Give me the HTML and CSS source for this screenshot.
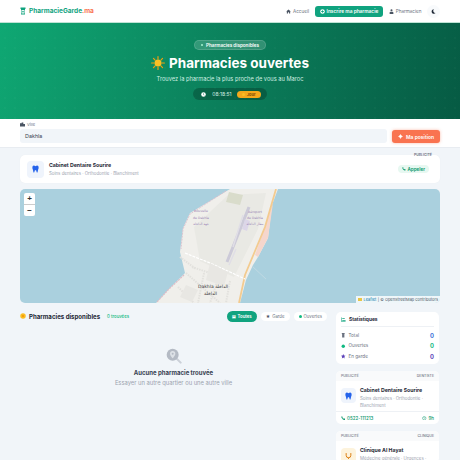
FILE: index.html
```html
<!DOCTYPE html>
<html lang="fr">
<head>
    <meta charset="UTF-8">
    <title>PharmacieGarde.ma</title>
    <link rel="stylesheet" href="styles.css">
</head>
<body>
    <nav class="navbar">
        <div class="brand">
            <svg class="brand-icon" viewBox="0 0 12 14"><path d="M1 0h10v3h-1v11H2V3H1z" fill="#10a37f"/><path d="M3 5h6v7H3z" fill="#fff"/><path d="M5.300 6.500h1.400v1.300H8v1.400H6.700v1.300H5.300V9.200H4V7.800h1.300z" fill="#10a37f"/></svg>
            <span>PharmacieGarde<em>.ma</em></span>
        </div>
        <div class="nav-links">
            <a class="nav-link">
                <svg viewBox="0 0 12 12"><path d="M6 1l5.500 5H10v5H7.300V8H4.700v3H2V6H.5z" fill="#4b5563"/></svg>
                Accueil
            </a>
            <a class="nav-cta">
                <svg viewBox="0 0 12 12"><circle cx="6" cy="6" r="5.500" fill="#fff"/><path d="M5 3h2v2h2v2H7v2H5V7H3V5h2z" fill="#10a37f"/></svg>
                Inscrire ma pharmacie
            </a>
            <a class="nav-link">
                <svg viewBox="0 0 12 12"><circle cx="6" cy="3" r="2.500" fill="#4b5563"/><path d="M1.500 12V9q0-2.500 2.500-2.500h4q2.500 0 2.500 2.500v3z" fill="#4b5563"/></svg>
                Pharmacien
            </a>
            <button class="theme-toggle">
                <svg viewBox="0 0 12 12"><path d="M7 .5a5.500 5.500 0 1 0 4 9.300A5.500 5.500 0 0 1 7 .5z" fill="#1f2937"/></svg>
            </button>
        </div>
    </nav>

    <header class="hero">
        <div class="hero-badge"><i></i>Pharmacies disponibles</div>
        <h1>
            <svg class="sun" viewBox="0 0 24 24">
                <g stroke="#f59e0b" stroke-width="2" stroke-linecap="round">
                    <path d="M12 1v4M12 19v4M1 12h4M19 12h4M4.200 4.200l2.800 2.800M17 17l2.800 2.800M4.200 19.800L7 17M17 7l2.800-2.800"/>
                </g>
                <circle cx="12" cy="12" r="6" fill="#fbbf24"/>
            </svg>
            Pharmacies ouvertes
        </h1>
        <p>Trouvez la pharmacie la plus proche de vous au Maroc</p>
        <div class="hero-clock">
            <svg viewBox="0 0 12 12"><circle cx="6" cy="6" r="5.500" fill="#fff"/><path d="M6 3v3.300l2 1.200" fill="none" stroke="#0b6b50" stroke-width="1.200"/></svg>
            <span>08:18:51</span>
            <b><i></i>Jour</b>
        </div>
    </header>

    <section class="search-bar">
        <div class="search-field">
            <label>
                <svg viewBox="0 0 12 12"><path d="M0 11V3h4V1h4v4h4v6z" fill="#4b5563"/></svg>
                Ville
            </label>
            <div class="search-input">Dakhla</div>
        </div>
        <button class="locate-btn">
            <svg viewBox="0 0 12 12"><circle cx="6" cy="6" r="3.500" fill="#fff"/><path d="M6 0v12M0 6h12" stroke="#fff" stroke-width="1.200"/></svg>
            Ma position
        </button>
    </section>

    <div class="page">
        <div class="ad-banner">
            <span class="ad-tag">PUBLICITÉ</span>
            <div class="ad-icon">
                <svg viewBox="0 0 12 14"><path d="M3 1q1.500 0 3 1 1.500-1 3-1 2.500 0 2.500 3.500 0 2-1 4L9.500 13H8.300L7 9H5l-1.300 4H2.500l-1-4.500q-1-2-1-4Q.5 1 3 1z" fill="#2563eb"/></svg>
            </div>
            <div class="ad-text">
                <strong>Cabinet Dentaire Sourire</strong>
                <small>Soins dentaires · Orthodontie · Blanchiment</small>
            </div>
            <a class="ad-call">
                <svg viewBox="0 0 12 12"><path d="M1 1.500L3.500 1l1.300 2.800-1.300 1q1 2 2.700 2.700l1-1.300L11 7.500 10.500 10Q9.500 11 8 10.700 2.500 9 1.300 4 .8 2.500 1 1.500z" fill="#059669"/></svg>
                Appeler
            </a>
        </div>

        <div class="map">
            <svg class="map-tiles" viewBox="0 0 420 114" preserveAspectRatio="none">
                <rect width="420" height="114" fill="#aad0de"/>
                <!-- presqu'ile de Dakhla -->
                <path d="M210 0L170 24 163 39 160 63 165 84 150 99 136 114H220L226 91 233 76 238 68 248 49 252 16 258 0z" fill="#f0efeb"/>
                <path d="M253 14L248 49 238 68 235 66 244 40z" fill="#f5d6cc"/>
                <path d="M208 6L246 4 238 40 214 88 180 72 174 38z" fill="#e9e9e4"/>
                <path d="M209 3l14 3-3 10-14-3z" fill="#d9dccb"/>
                <!-- aeroport -->
                <path d="M229 18L207 73" stroke="#cccad8" stroke-width="3"/>
                <path d="M223 26L213 58M216 60L209 76" stroke="#e0dee6" stroke-width="1.500"/>
                <path d="M225 30l5 2-3 10-5-2z" fill="#dcd6e8"/>
                <!-- routes et limite -->
                <path d="M256 0L245 38 225 86 219 114" fill="none" stroke="#f3cb90" stroke-width="1.800"/>
                <path d="M206 2L170 25 163 40 161 60" fill="none" stroke="#dcc3cf" stroke-width="1" stroke-dasharray="2 1"/>
                <path d="M164 86L148 101 137 113" fill="none" stroke="#dfbcc6" stroke-width="1.200" stroke-dasharray="2 1"/>
                <path d="M165 64L190 74 210 83 225 90" fill="none" stroke="#fff" stroke-width="1.200" stroke-dasharray="3 1"/>
                <path d="M160 68L176 80M166 84L200 114M172 78L196 86M158 98L174 114M184 84L178 114M198 90L190 114M210 92L206 114" fill="none" stroke="#e2e1dd" stroke-width="2" stroke-dasharray="1.500 1"/>
                <path d="M190 74l18 9-4 14-18-6zM166 96l12 5-6 12-12-5z" fill="#e8e7e3"/>
                <path d="M233 78L246 90" stroke="#c4dbe3" stroke-width=".8"/>
                <text class="map-label-purple"><tspan x="181" y="23">Nouvelle</tspan><tspan x="181" y="30">de Dakhla</tspan><tspan x="181" y="36">جهة الداخلة</tspan></text>
                <text class="map-label-purple"><tspan x="235" y="24">Aéroport</tspan><tspan x="235" y="30">de Dakhla</tspan><tspan x="235" y="36">مطار الداخلة</tspan></text>
                <text class="map-label" x="178" y="99">Dakhla الداخلة</text>
                <text class="map-label" x="184" y="106">الداخلة</text>
            </svg>
            <div class="zoom-ctrl">
                <span>+</span>
                <span>−</span>
            </div>
            <div class="attribution"><i></i><em>Leaflet</em> | © OpenStreetMap contributors</div>
        </div>

        <div class="content">
            <main class="list-col">
                <div class="list-head">
                    <div class="list-title">
                        <svg viewBox="0 0 12 12"><circle cx="6" cy="6" r="5.500" fill="#fbbf24"/><circle cx="6" cy="6" r="2.500" fill="#f59e0b"/></svg>
                        <h2>Pharmacies disponibles</h2>
                        <span class="count">0 trouvées</span>
                    </div>
                    <div class="filters">
                        <span class="filter active">▤ Toutes</span>
                        <span class="filter"><b class="star">★</b> Garde</span>
                        <span class="filter"><b class="dot"></b> Ouvertes</span>
                    </div>
                </div>
                <div class="empty">
                    <svg viewBox="0 0 24 24"><path d="M15 15l7 7" stroke="#cbd0d8" stroke-width="3" stroke-linecap="round"/><circle cx="10" cy="10" r="9" fill="#b4bac4"/><path d="M10 4.500a4 4 0 0 0-4 4c0 3 4 7 4 7s4-4 4-7a4 4 0 0 0-4-4z" fill="#dde1e6"/><circle cx="10" cy="8.500" r="1.500" fill="#b4bac4"/></svg>
                    <strong>Aucune pharmacie trouvée</strong>
                    <p>Essayer un autre quartier ou une autre ville</p>
                </div>
            </main>

            <aside class="sidebar">
                <div class="card stats">
                    <div class="stats-title">
                        <svg viewBox="0 0 12 12"><path d="M1 1v10h10" fill="none" stroke="#10a37f" stroke-width="1.500"/><path d="M3 3h6v2H3zM3 7h8v2H3z" fill="#10a37f"/></svg>
                        Statistiques
                    </div>
                    <div class="stat-row">
                        <svg viewBox="0 0 12 12"><path d="M2 0h8v2H9v10H3V2H2z" fill="#6b7280"/></svg>
                        <span>Total</span><b class="blue">0</b>
                    </div>
                    <div class="stat-row">
                        <svg viewBox="0 0 12 12"><circle cx="6" cy="6" r="4.500" fill="#10b981"/></svg>
                        <span>Ouvertes</span><b class="green">0</b>
                    </div>
                    <div class="stat-row">
                        <svg viewBox="0 0 12 12"><path d="M6 0l1.800 4 4.200.500-3.100 2.900.8 4.300L6 9.600l-3.700 2.100.8-4.300L0 4.500 4.200 4z" fill="#5b3fb8"/></svg>
                        <span>En garde</span><b class="purple">0</b>
                    </div>
                </div>

                <div class="card ad-card">
                    <div class="ad-card-head"><span>PUBLICITÉ</span><span>DENTISTE</span></div>
                    <div class="ad-card-body">
                        <div class="ad-card-icon blue-bg">
                            <svg viewBox="0 0 12 14"><path d="M3 1q1.500 0 3 1 1.500-1 3-1 2.500 0 2.500 3.500 0 2-1 4L9.500 13H8.300L7 9H5l-1.300 4H2.500l-1-4.500q-1-2-1-4Q.5 1 3 1z" fill="#2563eb"/></svg>
                        </div>
                        <div class="ad-card-text">
                            <strong>Cabinet Dentaire Sourire</strong>
                            <small>Soins dentaires · Orthodontie · Blanchiment</small>
                        </div>
                    </div>
                    <div class="ad-card-foot">
                        <span><svg viewBox="0 0 12 12"><path d="M1 1.500L3.500 1l1.300 2.800-1.300 1q1 2 2.700 2.700l1-1.300L11 7.500 10.500 10Q9.500 11 8 10.700 2.500 9 1.300 4 .8 2.500 1 1.500z" fill="#059669"/></svg>0522-111213</span>
                        <span><svg viewBox="0 0 12 12"><circle cx="6" cy="6" r="4.500" fill="none" stroke="#059669" stroke-width="1.300"/><path d="M6 3.500V6l1.800 1" fill="none" stroke="#059669"/></svg>9h</span>
                    </div>
                </div>

                <div class="card ad-card">
                    <div class="ad-card-head"><span>PUBLICITÉ</span><span>CLINIQUE</span></div>
                    <div class="ad-card-body">
                        <div class="ad-card-icon amber-bg">
                            <svg viewBox="0 0 12 12"><path d="M2 1v4a4 4 0 0 0 8 0V1M6 9v2" fill="none" stroke="#d97706" stroke-width="1.600"/></svg>
                        </div>
                        <div class="ad-card-text">
                            <strong>Clinique Al Hayat</strong>
                            <small>Médecine générale · Urgences ·</small>
                        </div>
                    </div>
                </div>
            </aside>
        </div>
    </div>
</body>
</html>
```

FILE: styles.css
```css
* {
    box-sizing: border-box;
}
html, body {
    height: 460px;
    overflow: hidden;
}
body {
    margin: 0;
    font-family: Inter, "Liberation Sans", sans-serif;
    background-color: #f1f5f9;
    color: #1f2937;
}
svg {
    display: block;
    flex-shrink: 0;
}

/* Barre de navigation */
.navbar {
    height: 23px;
    padding: 0 20px;
    display: flex;
    align-items: center;
    justify-content: space-between;
    background-color: #fff;
    border-bottom: 1px solid #bfe3d5;
}
.brand {
    display: flex;
    align-items: center;
    gap: 3px;
    font-size: 6.500px;
    font-weight: 700;
    color: #10a37f;
}
.brand em {
    font-style: normal;
    color: #f97350;
}
.brand-icon {
    width: 6px;
    height: 8px;
}
.nav-links {
    display: flex;
    align-items: center;
    gap: 5.500px;
}
.nav-link {
    display: flex;
    align-items: center;
    gap: 2px;
    font-size: 4.600px;
    color: #6b7280;
}
.nav-link svg {
    width: 5px;
    height: 5px;
}
.nav-cta {
    height: 11px;
    padding: 0 5px;
    display: flex;
    align-items: center;
    gap: 2px;
    font-size: 4.800px;
    font-weight: 600;
    color: #fff;
    background-color: #10a37f;
    border-radius: 3px;
}
.nav-cta svg {
    width: 5px;
    height: 5px;
}
.theme-toggle {
    width: 13px;
    height: 13px;
    padding: 0;
    display: flex;
    align-items: center;
    justify-content: center;
    background-color: #f8fafc;
    border: none;
    border-radius: 50%;
}
.theme-toggle svg {
    width: 5px;
    height: 5px;
}

/* Bandeau principal */
.hero {
    height: 96px;
    padding-top: 17px;
    display: flex;
    flex-direction: column;
    align-items: center;
    color: #fff;
    background-image:
        radial-gradient(rgba(255, 255, 255, 0.025) 1px, transparent 1px),
        linear-gradient(110deg, #0fa873 0%, #0b7f5b 50%, #065a43 100%);
    background-size: 10px 10px, auto;
}
.hero-badge {
    height: 10px;
    padding: 0 6px;
    display: flex;
    align-items: center;
    gap: 3px;
    font-size: 4.600px;
    font-weight: 600;
    background-color: rgba(255, 255, 255, 0.16);
    border: 0.5px solid rgba(255, 255, 255, 0.15);
    border-radius: 5px;
}
.hero-badge i {
    width: 2px;
    height: 2px;
    border-radius: 50%;
    background-color: #a7f3d0;
}
.hero h1 {
    margin: 4px 0 0;
    display: flex;
    align-items: center;
    gap: 4px;
    font-size: 13.500px;
    line-height: 18px;
    font-weight: 700;
}
.sun {
    width: 14px;
    height: 14px;
}
.hero p {
    margin: 3px 0 0;
    font-size: 5.700px;
    line-height: 8px;
    color: #cdeee0;
}
.hero-clock {
    height: 12px;
    margin-top: 5px;
    padding: 0 6px 0 8px;
    display: flex;
    align-items: center;
    gap: 5px;
    font-size: 5px;
    color: #d5efe5;
    background-color: rgba(0, 0, 0, 0.22);
    border-radius: 6px;
}
.hero-clock svg {
    width: 5px;
    height: 5px;
    margin-right: 1px;
}
.hero-clock b {
    height: 7px;
    width: 24px;
    display: flex;
    align-items: center;
    justify-content: center;
    gap: 2px;
    font-size: 4px;
    color: #7c4a03;
    background-color: #f5a81c;
    border-radius: 3.500px;
}
.hero-clock b i {
    width: 3px;
    height: 3px;
    border-radius: 50%;
    background-color: #fbbf24;
}

/* Recherche */
.search-bar {
    height: 29px;
    padding: 3px 20px 4px;
    display: flex;
    align-items: flex-end;
    gap: 5px;
    background-color: #fff;
    border-bottom: 1px solid #e8ecf1;
}
.search-field {
    flex: 1;
}
.search-field label {
    display: flex;
    align-items: center;
    gap: 2px;
    height: 7px;
    margin-bottom: 1px;
    font-size: 4px;
    color: #6b7280;
}
.search-field label svg {
    width: 5px;
    height: 5px;
}
.search-input {
    height: 14px;
    padding: 0 5px;
    display: flex;
    align-items: center;
    font-size: 5.400px;
    color: #374151;
    background-color: #f1f5f9;
    border-radius: 3px;
}
.locate-btn {
    width: 48px;
    height: 13px;
    padding: 0;
    display: flex;
    align-items: center;
    justify-content: center;
    gap: 3px;
    font-family: inherit;
    font-size: 5px;
    font-weight: 600;
    color: #fff;
    background-color: #f97350;
    border: none;
    border-radius: 3px;
    box-shadow: 0 0 3px rgba(249, 115, 80, 0.5);
}
.locate-btn svg {
    width: 5px;
    height: 5px;
}

.page {
    padding: 7px 20px 0;
}

/* Publicite du haut */
.ad-banner {
    position: relative;
    height: 28px;
    padding: 0 11px 0 7px;
    display: flex;
    align-items: center;
    background-color: #fff;
    border-radius: 5px;
    box-shadow: 0 0 1px rgba(0, 0, 0, 0.06);
}
.ad-tag {
    position: absolute;
    top: -2px;
    right: 8px;
    font-size: 3.500px;
    font-weight: 600;
    color: #6b7280;
}
.ad-icon {
    width: 17px;
    height: 17px;
    margin-right: 5px;
    display: flex;
    align-items: center;
    justify-content: center;
    background-color: #eff4fc;
    border-radius: 4px;
}
.ad-icon svg {
    width: 7px;
    height: 8px;
}
.ad-text {
    flex: 1;
    display: flex;
    flex-direction: column;
    gap: 3px;
}
.ad-text strong {
    font-size: 5.200px;
    font-weight: 700;
    color: #1f2937;
}
.ad-text small {
    font-size: 4.400px;
    color: #9ca3af;
}
.ad-call {
    height: 8px;
    padding: 0 4px;
    display: flex;
    align-items: center;
    gap: 1px;
    font-size: 4.600px;
    font-weight: 600;
    color: #059669;
    background-color: #e7f8f1;
    border-radius: 4px;
}
.ad-call svg {
    width: 4px;
    height: 4px;
}

/* Carte */
.map {
    position: relative;
    height: 114px;
    margin-top: 6px;
    overflow: hidden;
    border-radius: 5px;
}
.map-tiles {
    width: 100%;
    height: 100%;
}
.map-label {
    font-family: "DejaVu Sans", sans-serif;
    font-size: 4.500px;
    fill: #333;
}
.map-label-purple {
    font-family: "DejaVu Sans", sans-serif;
    font-size: 3.200px;
    fill: #9a86b6;
    text-anchor: middle;
}
.zoom-ctrl {
    position: absolute;
    top: 4px;
    left: 4px;
    width: 11px;
    display: flex;
    flex-direction: column;
    gap: 0.5px;
    background-color: #ccc;
    border-radius: 2px;
    overflow: hidden;
}
.zoom-ctrl span {
    height: 11px;
    display: flex;
    align-items: center;
    justify-content: center;
    font-family: "Liberation Sans", sans-serif;
    font-size: 8px;
    font-weight: 700;
    color: #333;
    background-color: #fff;
}
.attribution {
    position: absolute;
    right: 0;
    bottom: 0;
    height: 7px;
    padding: 0 2px;
    display: flex;
    align-items: center;
    gap: 1.500px;
    font-size: 3.950px;
    color: #4b5563;
    background-color: rgba(255, 255, 255, 0.8);
}
.attribution em {
    font-style: normal;
    color: #0078a8;
}
.attribution i {
    width: 4px;
    height: 3px;
    background-color: #e8c547;
}

/* Liste et colonne laterale */
.content {
    display: grid;
    grid-template-columns: 307px 103px;
    gap: 9px;
    margin-top: 9px;
}
.list-head {
    height: 8px;
    display: flex;
    align-items: center;
    justify-content: space-between;
}
.list-title {
    display: flex;
    align-items: center;
    gap: 3px;
}
.list-title svg {
    width: 6px;
    height: 6px;
}
.list-title h2 {
    margin: 0;
    font-size: 6.100px;
    font-weight: 700;
    color: #1f2937;
}
.count {
    margin-left: 4px;
    font-size: 4.300px;
    font-weight: 500;
    color: #10b981;
}
.filters {
    display: flex;
    align-items: center;
    gap: 4px;
}
.filter {
    height: 9px;
    padding: 0 5px;
    display: flex;
    align-items: center;
    gap: 2px;
    font-size: 4.300px;
    color: #6b7280;
    background-color: #fff;
    border-radius: 5px;
}
.filter.active {
    height: 11px;
    padding: 0 5px;
    font-weight: 600;
    color: #fff;
    background-color: #10a37f;
    border-radius: 6px;
}
.star {
    color: #4b5563;
}
.dot {
    width: 3px;
    height: 3px;
    border-radius: 50%;
    background-color: #10b981;
}
.empty {
    margin-top: 28px;
    display: flex;
    flex-direction: column;
    align-items: center;
}
.empty svg {
    width: 16px;
    height: 16px;
}
.empty strong {
    margin-top: 5px;
    font-size: 6px;
    font-weight: 700;
    color: #374151;
}
.empty p {
    margin: 3px 0 0;
    font-size: 5.800px;
    color: #9ca3af;
}
.sidebar {
    display: flex;
    flex-direction: column;
    gap: 7px;
}
.card {
    background-color: #fff;
    border-radius: 5px;
    overflow: hidden;
}
.stats {
    height: 52px;
    padding: 0 5px;
}
.stats-title {
    height: 15px;
    display: flex;
    align-items: center;
    gap: 3px;
    font-size: 4.900px;
    font-weight: 700;
    color: #1f2937;
    border-bottom: 0.5px solid #eef1f5;
}
.stats-title svg {
    width: 5px;
    height: 5px;
}
.stat-row {
    height: 10.500px;
    display: flex;
    align-items: center;
    gap: 3px;
    font-size: 4.600px;
    color: #6b7280;
}
.stats-title + .stat-row {
    margin-top: 3px;
}
.stat-row svg {
    width: 4.500px;
    height: 4.500px;
}
.stat-row span {
    flex: 1;
}
.stat-row b {
    font-size: 5.800px;
    font-weight: 700;
}
.blue { color: #3b6fd8; }
.green { color: #10b981; }
.purple { color: #5b3fb8; }
.ad-card-head {
    height: 10px;
    padding: 0 5px;
    display: flex;
    align-items: center;
    justify-content: space-between;
    font-size: 3.500px;
    font-weight: 500;
    color: #6b7280;
    background-color: #f9fafb;
}
.ad-card-body {
    padding: 6px 5px 0;
    display: flex;
    gap: 4px;
}
.ad-card-icon {
    width: 15px;
    height: 15px;
    margin-top: 1px;
    display: flex;
    align-items: center;
    justify-content: center;
    flex-shrink: 0;
    border-radius: 4px;
}
.ad-card-icon svg {
    width: 7px;
    height: 8px;
}
.blue-bg { background-color: #eff4fc; }
.amber-bg { background-color: #fdf3dc; }
.ad-card-text {
    display: flex;
    flex-direction: column;
    gap: 2px;
    min-width: 0;
}
.ad-card-text strong {
    font-size: 5.200px;
    line-height: 6px;
    font-weight: 700;
    white-space: nowrap;
    color: #1f2937;
}
.ad-card-text small {
    font-size: 4.400px;
    line-height: 7px;
    color: #9ca3af;
}
.ad-card-foot {
    height: 13px;
    margin-top: 2px;
    padding: 0 5px;
    display: flex;
    align-items: center;
    justify-content: space-between;
    font-size: 4.500px;
    font-weight: 500;
    color: #059669;
    border-top: 0.5px solid #eef1f5;
}
.ad-card-foot span {
    display: flex;
    align-items: center;
    gap: 1.500px;
}
.ad-card-foot svg {
    width: 4.500px;
    height: 4.500px;
}
```
